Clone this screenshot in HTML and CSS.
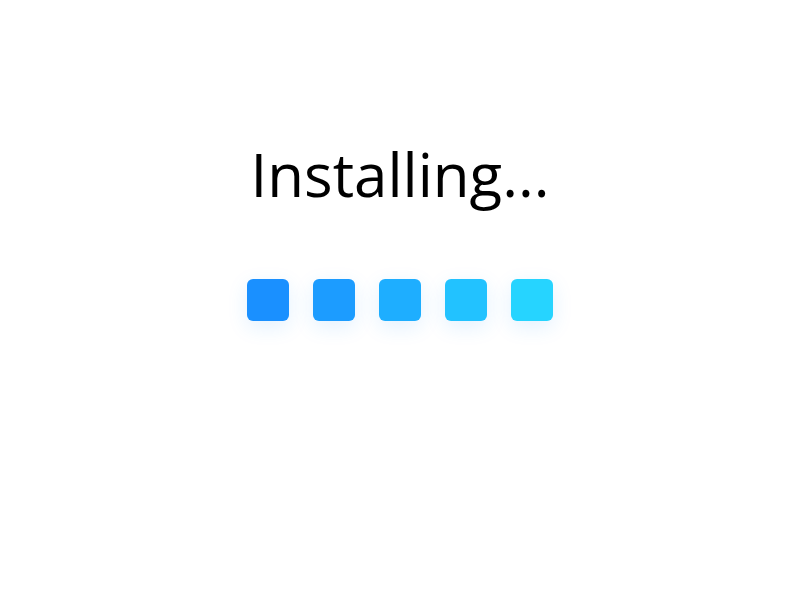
FILE: index.html
```html
<!DOCTYPE html>
<html lang="en">
<head>
<meta charset="utf-8">
<title>Installing</title>
<link rel="stylesheet" href="styles.css">
</head>
<body>
<main class="screen">
  <h1 class="title">Installing...</h1>
  <div class="loader">
    <span class="block b1"></span>
    <span class="block b2"></span>
    <span class="block b3"></span>
    <span class="block b4"></span>
    <span class="block b5"></span>
  </div>
</main>
</body>
</html>
```

FILE: styles.css
```css
html, body {
  margin: 0;
  padding: 0;
  background: #ffffff;
}
.screen {
  width: 800px;
  height: 600px;
  display: flex;
  flex-direction: column;
  align-items: center;
  padding-top: 132px;
  box-sizing: border-box;
}
.title {
  margin: 0;
  font-family: "Open Sans", sans-serif;
  font-weight: 400;
  font-size: 60px;
  line-height: 84px;
  color: #000000;
  letter-spacing: 0;
}
.loader {
  display: flex;
  gap: 24px;
  margin-top: 63px;
}
.block {
  width: 42px;
  height: 42px;
  border-radius: 6px;
  box-shadow: 0 6px 20px rgba(30, 150, 255, 0.13);
}
.b1 { background: #1a90ff; }
.b2 { background: #1c9cff; }
.b3 { background: #1eaeff; }
.b4 { background: #22c2ff; }
.b5 { background: #26d4ff; }
```
